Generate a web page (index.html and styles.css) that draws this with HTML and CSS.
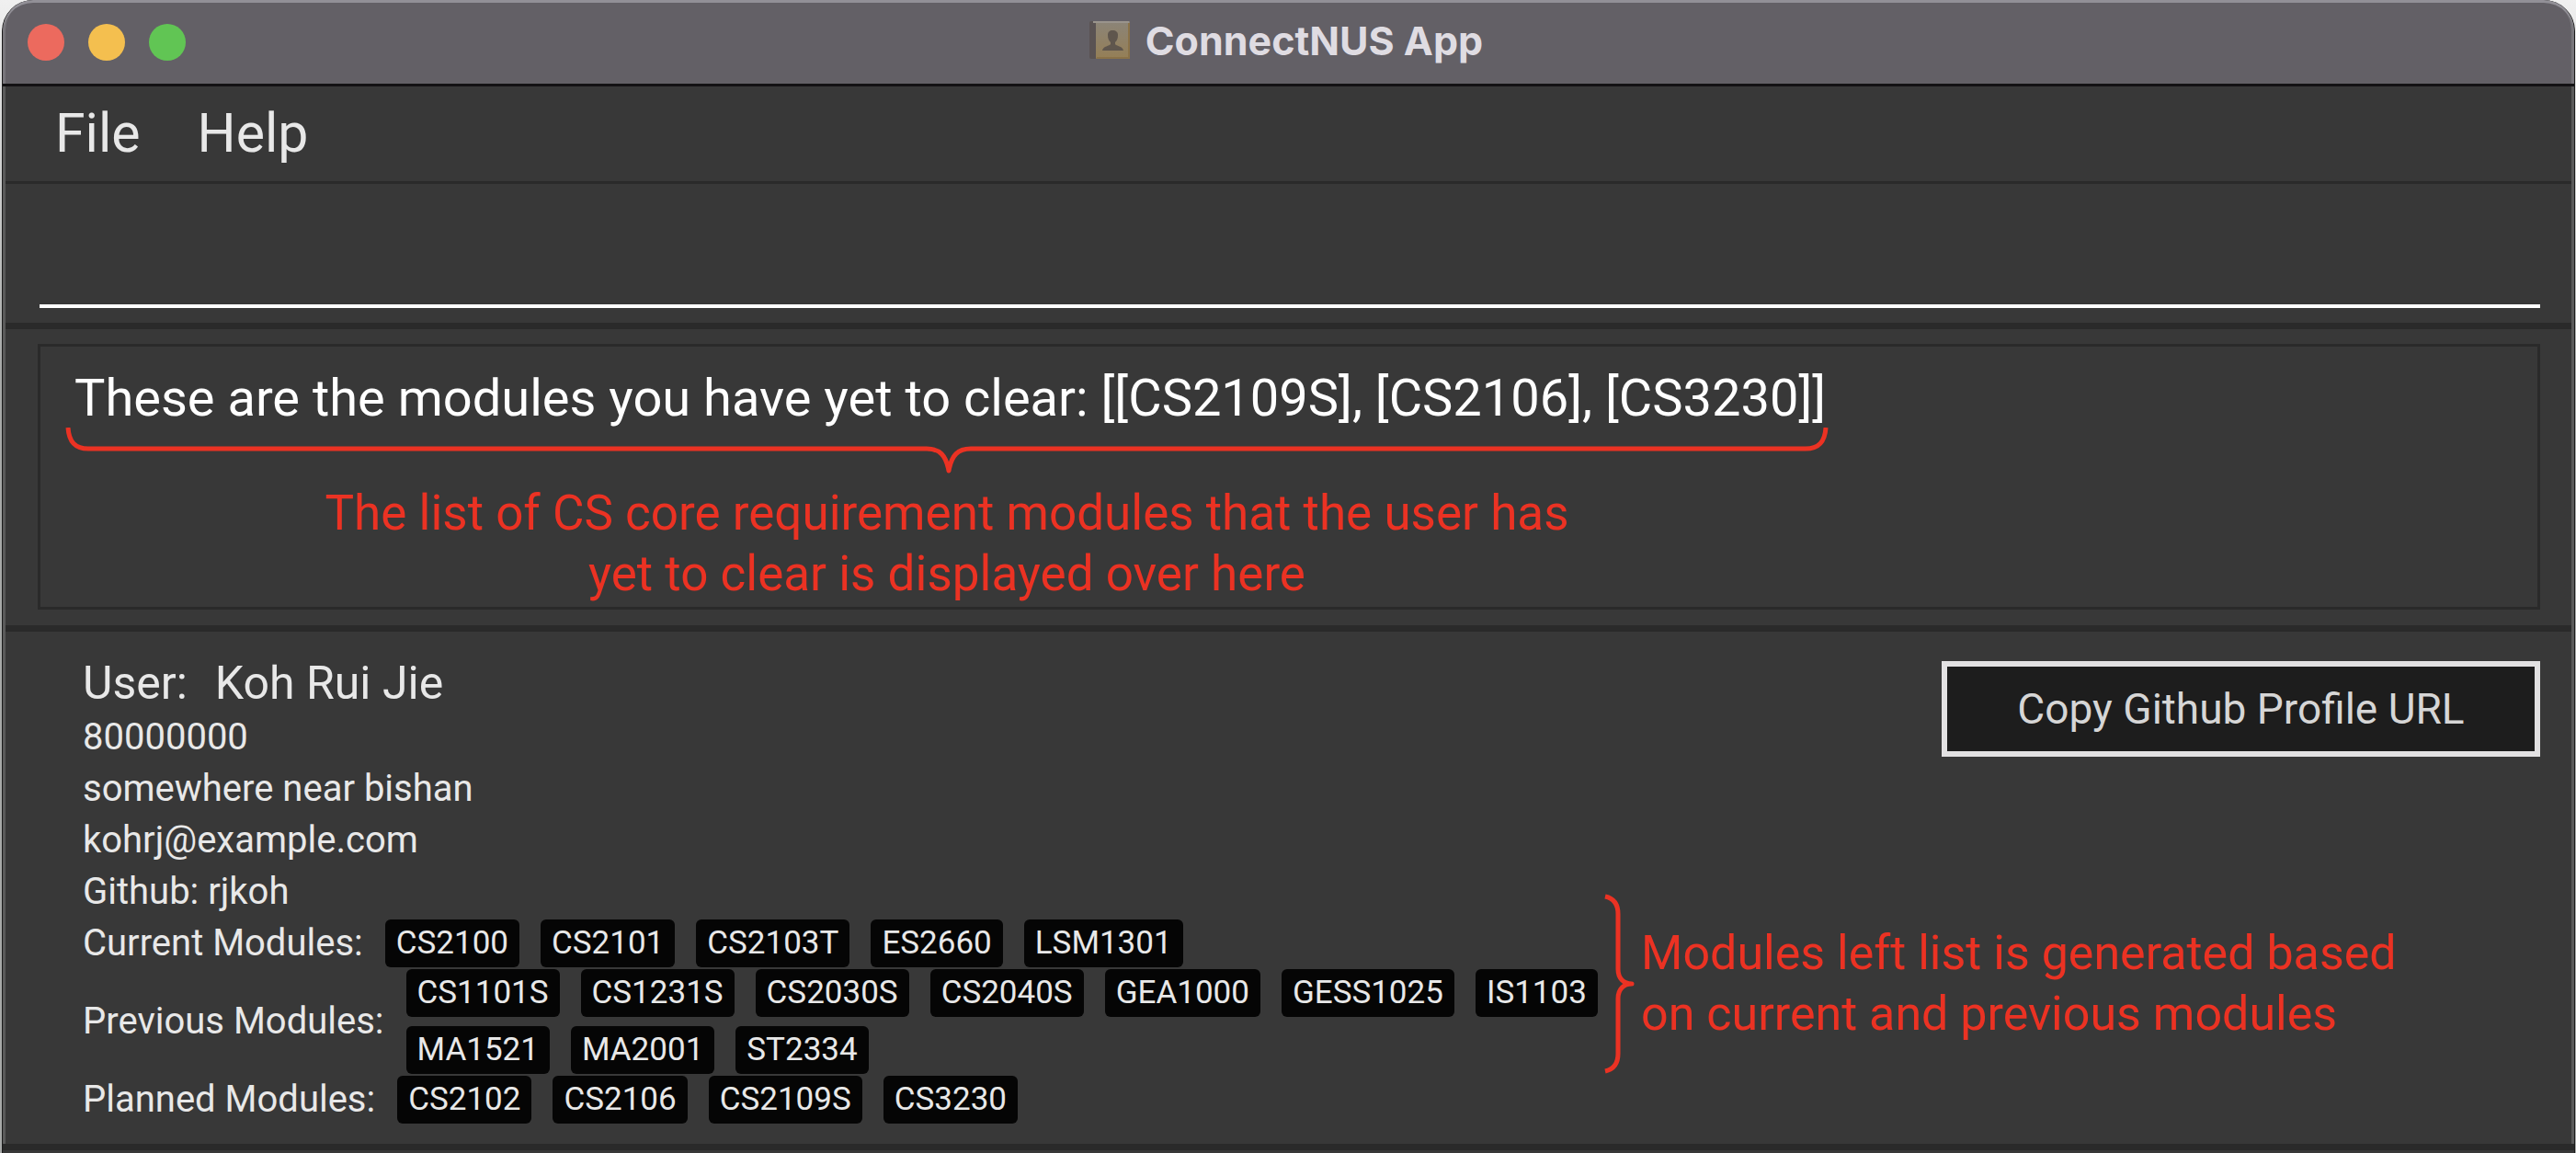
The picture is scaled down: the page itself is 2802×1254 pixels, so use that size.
FILE: index.html
```html
<!DOCTYPE html>
<html lang="en">
<head>
<meta charset="utf-8">
<title>ConnectNUS App</title>
<link rel="stylesheet" href="styles.css">
</head>
<body>
<div class="window">
  <header class="titlebar">
    <div class="lights">
      <button class="light light-close" type="button" aria-label="Close"></button>
      <button class="light light-minimise" type="button" aria-label="Minimise"></button>
      <button class="light light-zoom" type="button" aria-label="Zoom"></button>
    </div>
    <h1 class="title">
      <svg class="title-icon" viewBox="0 0 46 44" aria-hidden="true">
        <defs>
          <linearGradient id="cover" x1="0" y1="0" x2="0" y2="1">
            <stop offset="0" stop-color="#8b8478"/>
            <stop offset="1" stop-color="#957f56"/>
          </linearGradient>
        </defs>
        <rect x="1" y="1" width="44" height="41" rx="2" fill="#5a5353"/>
        <rect x="8" y="1" width="37" height="41" rx="1" fill="url(#cover)"/>
        <path d="M5 2H44" stroke="#9a948c" stroke-width="2"/>
        <path d="M44 3V41H9" stroke="#8a7248" stroke-width="2" fill="none"/>
        <path d="M26 11c-3 0-5 2-5 5 0 4 1 6 3 8v2c-1 2-8 2-9 7h23c-1-5-8-5-9-7v-2c2-2 3-4 3-8 0-3-2-5-6-5z" fill="#5f564d"/>
      </svg>
      ConnectNUS App
    </h1>
  </header>

  <nav class="menubar" aria-label="Main menu">
    <button class="menu" type="button">File</button>
    <button class="menu" type="button">Help</button>
  </nav>

  <form class="command">
    <input class="command-input" type="text" aria-label="Command">
  </form>

  <section class="result">
    <textarea class="result-text" aria-label="Result" readonly>These are the modules you have yet to clear: [[CS2109S], [CS2106], [CS3230]]</textarea>
    <div class="note note-result">
      <svg class="brace-down" viewBox="0 0 1920 60" aria-hidden="true">
        <path d="M4 0C5 16 12 23 26 23H938C952 23 959 30 962 47C965 30 972 23 986 23H1894C1908 23 1915 16 1916 0"/>
      </svg>
      <p class="note-text">The list of CS core requirement modules that the user has<br>yet to clear is displayed over here</p>
    </div>
  </section>

  <main class="profile">
    <div class="details">
      <h2 class="name"><span>User:</span><span>Koh Rui Jie</span></h2>
      <p class="line">80000000</p>
      <p class="line">somewhere near bishan</p>
      <p class="line">kohrj@example.com</p>
      <p class="line">Github: rjkoh</p>
      <div class="modules">
        <span>Current Modules:</span>
        <ul class="chips">
          <li class="chip">CS2100</li><li class="chip">CS2101</li><li class="chip">CS2103T</li><li class="chip">ES2660</li><li class="chip">LSM1301</li>
        </ul>
      </div>
      <div class="modules">
        <span>Previous Modules:</span>
        <ul class="chips">
          <li class="chip">CS1101S</li><li class="chip">CS1231S</li><li class="chip">CS2030S</li><li class="chip">CS2040S</li><li class="chip">GEA1000</li><li class="chip">GESS1025</li><li class="chip">IS1103</li><li class="chip">MA1521</li><li class="chip">MA2001</li><li class="chip">ST2334</li>
        </ul>
      </div>
      <div class="modules">
        <span>Planned Modules:</span>
        <ul class="chips">
          <li class="chip">CS2102</li><li class="chip">CS2106</li><li class="chip">CS2109S</li><li class="chip">CS3230</li>
        </ul>
      </div>
    </div>
    <button class="copy" type="button">Copy Github Profile URL</button>
    <div class="note note-modules">
      <svg class="brace-right" viewBox="0 0 34 196" aria-hidden="true">
        <path d="M1 3C10 5 15 11 15 22V82C15 92 21 98 30 98C21 98 15 104 15 114V174C15 185 10 191 1 193"/>
      </svg>
      <p class="note-text">Modules left list is generated based<br>on current and previous modules</p>
    </div>
  </main>
</div>
</body>
</html>
```

FILE: styles.css
```css
* {
  box-sizing: border-box;
}

body {
  margin: 0;
  padding: 0 1px 0 2px;
  background: linear-gradient(#f0f0f0, #a8aaa9 400px);
  font-family: Roboto, "Liberation Sans", sans-serif;
  color: #e8e8e8;
}

h1, h2, p, ul {
  margin: 0;
  padding: 0;
  font-weight: 400;
}

button, input, textarea {
  font: inherit;
  color: inherit;
}

.window {
  min-height: 100vh;
  border: solid #1a1a1a;
  border-width: 0 1px;
  border-radius: 34px 34px 0 0;
  background: #383838;
  overflow: hidden;
}

.titlebar {
  display: grid;
  grid-template-columns: 1fr auto 1fr;
  align-items: center;
  height: 94px;
  padding: 0 27px;
  border-bottom: 3px solid #131214;
  border-radius: 33px 33px 0 0;
  background: #636066;
  box-shadow: inset 0 3px 0 #929097, inset 3px 0 0 #78767b, inset -3px 0 0 #78767b;
}

.lights {
  display: flex;
  gap: 26px;
}

.light {
  width: 40px;
  height: 40px;
  padding: 0;
  border: 0;
  border-radius: 50%;
}

.light-close { background: #ec6a5e; }
.light-minimise { background: #f4bf4f; }
.light-zoom { background: #61c554; }

.title {
  display: flex;
  align-items: center;
  gap: 16px;
  padding: 0 6px 4px 0;
  font-family: Inter, "Liberation Sans", sans-serif;
  font-size: 43px;
  font-weight: 700;
  line-height: 52px;
  color: #dfdce2;
}

.title-icon {
  width: 46px;
  height: 44px;
}

.menubar,
.command,
.result,
.profile {
  border: solid #5a5a5a;
  border-width: 0 3px;
}

.menubar {
  display: flex;
  gap: 62px;
  padding: 14px 54px 16px;
}

.menu {
  padding: 0;
  border: 0;
  background: none;
  font-size: 59px;
  line-height: 73px;
}

.command {
  padding: 0 34px 16px 37px;
  box-shadow: inset 0 3px 0 #2a2a2a;
}

.command-input {
  display: block;
  width: 100%;
  height: 138px;
  padding: 0;
  border: 0;
  border-bottom: 4px solid #fff;
  outline: 0;
  background: none;
  font-size: 56px;
}

.result {
  position: relative;
  padding: 23px 34px 17px 35px;
  box-shadow: inset 0 7px 0 #2a2a2a;
}

.result-text {
  display: block;
  width: 100%;
  height: 289px;
  padding: 22px 37px;
  border: 3px solid #2a2a2a;
  outline: 0;
  resize: none;
  overflow: hidden;
  background: none;
  font-size: 56px;
  line-height: 68px;
  color: #fff;
}

.profile {
  position: relative;
  display: flex;
  justify-content: space-between;
  align-items: flex-start;
  padding: 36px 34px 22px 84px;
  box-shadow: inset 0 7px 0 #2a2a2a, 0 7px 0 #2a2a2a;
}

.details {
  font-size: 40px;
  line-height: 56px;
}

.name {
  display: flex;
  gap: 30px;
  margin-bottom: 4px;
  font-size: 50px;
  line-height: 54px;
}

.modules {
  display: flex;
  align-items: center;
  gap: 24px;
  padding-top: 2px;
  line-height: 52px;
}

.chips {
  display: flex;
  flex-wrap: wrap;
  gap: 10px 23px;
  max-width: 1310px;
  list-style: none;
}

.chip {
  padding: 0 12px;
  border-radius: 6px;
  background: #050505;
  font-size: 35px;
}

.copy {
  min-width: 651px;
  margin-top: 3px;
  padding: 16px 24px;
  border: 6px solid #e2e1e2;
  background: #1d1d1d;
  font-size: 46px;
  line-height: 60px;
  color: #d6d6d6;
}

.note {
  position: absolute;
  font-weight: 300;
  font-size: 53px;
  line-height: 66px;
  color: #eb3223;
}

.note svg {
  display: block;
  fill: none;
  stroke: #eb3223;
  stroke-width: 5;
  stroke-linejoin: round;
}

.note-result {
  top: 114px;
  left: 64px;
}

.note-result .note-text {
  text-align: center;
}

.brace-down {
  width: 1920px;
  height: 60px;
}

.note-modules {
  display: flex;
  align-items: center;
  gap: 6px;
  top: 292px;
  left: 1739px;
  font-size: 52px;
}

.brace-right {
  width: 34px;
  height: 196px;
}
```
